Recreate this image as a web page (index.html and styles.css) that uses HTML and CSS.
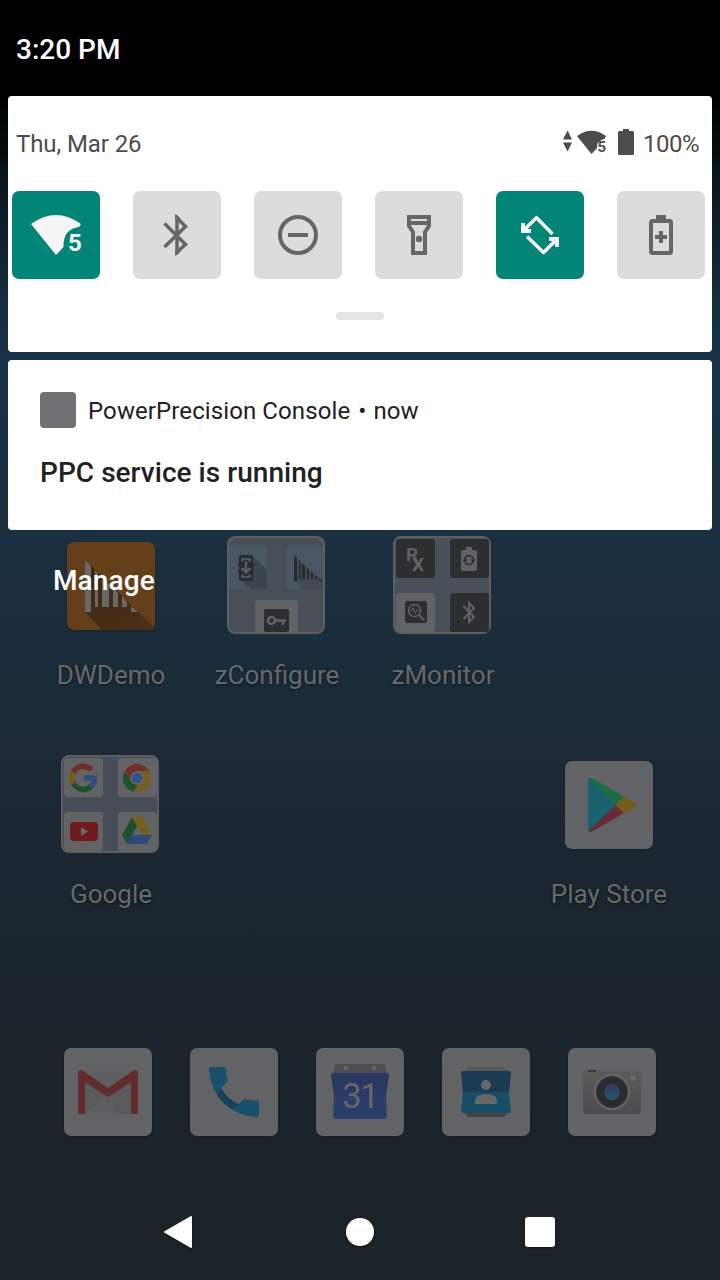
FILE: index.html
```html
<!DOCTYPE html>
<html lang="en">
<head>
<meta charset="utf-8">
<title>Quick settings</title>
<link rel="stylesheet" href="styles.css">
</head>
<body>
<div class="screen">
  <header class="status">3:20 PM</header>
  <section class="panel">
    <div class="info">
      <span class="date">Thu, Mar 26</span>
      <div class="signals">
        <svg class="traffic" width="10" height="22" viewBox="0 0 10 22" fill="#4c4c4c"><path d="M4.500 .5 9 9.500H0zM0 12.500h9L4.500 21.500z"/></svg>
        <svg class="wifi" width="30" height="25" viewBox="0 0 30 25"><path fill="#4c4c4c" d="M0 6Q14.500-4.300 29 6L27.500 9Q19.500 10.500 20 18L14.500 24z"/><text class="wifi-num" x="20.500" y="21.500">5</text></svg>
        <svg class="charge" width="16" height="26" viewBox="0 0 16 26"><path fill="#4c4c4c" d="M5 0h6v2h3.500Q16 2 16 3.500v21q0 1.500-1.500 1.500h-13Q0 26 0 24.500v-21Q0 2 1.500 2H5z"/></svg>
        <span class="percent">100%</span>
      </div>
    </div>
    <div class="toggles">
      <div class="toggle on"><svg width="88" height="88" viewBox="0 0 88 88"><path fill="#f5f5f5" d="M19 33Q44 15 69 33L67 36Q51 38 51.500 56L44 64z"/><text class="toggle-num" x="56" y="59.500">5</text></svg></div>
      <div class="toggle"><svg width="88" height="88" viewBox="0 0 88 88"><path fill="none" stroke="#666" stroke-width="3.500" d="M31.500 32.500 52.500 53.500 44 61V27L52.500 35.500 31.500 56"/><path fill="#666" d="M42.250 24h2l4 4.500h-6zM42.250 59.500h6l-4 4.500h-2z"/></svg></div>
      <div class="toggle"><svg width="88" height="88" viewBox="0 0 88 88"><circle cx="44" cy="44" r="18" fill="none" stroke="#666" stroke-width="4"/><path stroke="#666" stroke-width="4" d="M34 44h20"/></svg></div>
      <div class="toggle"><svg width="88" height="88" viewBox="0 0 88 88"><path fill="none" stroke="#666" stroke-width="4" d="M34 26h20v9l-4 6v21H38V41l-4-6zM34 32h20"/><circle cx="44" cy="48" r="3.200" fill="#666"/></svg></div>
      <div class="toggle on"><svg width="88" height="88" viewBox="0 0 88 88"><path fill="none" stroke="#f5f5f5" stroke-width="3.500" stroke-linejoin="round" d="M29 38 40.500 26.700 56.500 43M31 45.500 47.500 61.500 59 50"/><path fill="#f5f5f5" d="M25 32h4v3.500l2.500 2.500H35v4H25zM53 46h10v10h-4v-3.500L56.500 50H53z"/></svg></div>
      <div class="toggle"><svg width="88" height="88" viewBox="0 0 88 88"><rect x="34" y="30" width="20" height="32" rx="1.500" fill="none" stroke="#666" stroke-width="4"/><path fill="#666" d="M39 24h10v5H39z"/><path stroke="#666" stroke-width="4" d="M38 46h12M44 40v12"/></svg></div>
    </div>
    <div class="handle"></div>
  </section>
  <section class="notice">
    <div class="source"><i class="source-icon"></i><span>PowerPrecision Console</span><b class="dot">•</b><span>now</span></div>
    <div class="message">PPC service is running</div>
  </section>

  <main class="home">
    <div class="manage">Manage</div>
    <div class="row">
      <div class="app">
        <div class="slot"><svg class="icon" width="88" height="88" viewBox="0 0 88 88"><defs><linearGradient id="fade" x1="0" y1="0" x2=".9" y2="1"><stop offset="0" stop-color="#3b2614"/><stop offset="1" stop-color="#4c3116"/></linearGradient></defs><rect width="88" height="88" rx="7" fill="#643f1a"/><path fill="url(#fade)" d="M18 18 88 86 86 88H35L18 70z"/><path fill="#686868" d="M18 18l6 6v46h-6zM28 28l3 3v34h-3zM35 35l7 7v23h-7zM46 46l5 5v14h-5zM55 54l5 6v5h-5zM64 64l7 6h-7z"/></svg></div>
        <span class="label">DWDemo</span>
      </div>
      <div class="app">
        <div class="slot"><svg class="folder" width="98" height="98" viewBox="0 0 98 98">
          <defs><clipPath id="folder-clip"><rect x="1" y="1" width="96" height="96" rx="7"/></clipPath></defs>
          <rect x="1" y="1" width="96" height="96" rx="7" fill="#484f57"/>
          <g clip-path="url(#folder-clip)"><rect x="0" y="10" width="40" height="43" rx="2" fill="#4a5661"/><rect x="59" y="10" width="42" height="43" rx="2" fill="#4a5661"/><path fill="#3b454e" d="M26 20 40 34v19H24L13 44z"/>
          <path fill="#414a53" d="M67 45V20l31 28v5H76z"/>
          <rect x="12" y="19" width="14" height="26" rx="2.500" fill="#282b2e"/><path fill="#282b2e" d="m10.500 28 3-2h11l3 2-1.500 4 1.500 4-3 2h-11l-3-2 1.500-4z"/><path fill="#4a5661" d="M14 22h10v3l-2 1-1-2h-4l-1 2-2-1zM14 42h10v-3l-2-1-1 2h-4l-1-2-2 1z"/><path fill="none" stroke="#56616b" stroke-width="2.400" d="M19 25.500v11M14.500 32l4.500 4.500 4.500-4.500"/>
          <path fill="#272a2d" d="M67 19l3 3v23h-3zM72 24l1.500 1.500V43H72zM75 27l3 3v13h-3zM80 32l2 2v9h-2zM84 35l2 2v6h-2zM88 39l4 4h-4zM92 42l4 3h-4z"/>
          <rect x="28" y="64" width="43" height="40" rx="3" fill="#616263"/><rect x="37" y="73" width="25" height="23" rx="2" fill="#2c2e30"/><circle cx="44.500" cy="84.500" r="3.500" fill="none" stroke="#636567" stroke-width="2.500"/><path fill="none" stroke="#636567" stroke-width="2.500" d="M48 84.500h11M56 84v5"/></g>
          <rect x="1" y="1" width="96" height="96" rx="7" fill="none" stroke="#5d5e60" stroke-width="2"/></svg></div>
        <span class="label">zConfigure</span>
      </div>
      <div class="app">
        <div class="slot"><svg class="folder" width="98" height="98" viewBox="0 0 98 98"><rect x="1" y="1" width="96" height="96" rx="7" fill="#48515a" stroke="#5d5e60" stroke-width="2"/>
          <g fill="#2d2e30"><rect x="3" y="3" width="39" height="39" rx="3"/><rect x="57" y="3" width="39" height="39" rx="3"/><rect x="57" y="57" width="39" height="39" rx="3"/></g><rect x="3" y="57" width="39" height="39" rx="3" fill="#626364"/>
          <text class="rx" x="13" y="24.500">R<tspan x="19" y="34.700">X</tspan></text>
          <path fill="#616263" d="M73 11h6v3h3q2 0 2 2v17q0 2-2 2H70q-2 0-2-2V16q0-2 2-2h3z"/><path fill="none" stroke="#2d2e30" stroke-width="1.500" d="M72 23q1-4 4.500-3.500 3 .3 4 4M80 25q-1 4-4.500 3.500-3-.3-4-4"/><path fill="#2d2e30" d="M69.500 25 72 21.500l2.500 3.500zM77.500 23.500h5L80 27z"/>
          <rect x="12" y="65" width="22" height="22" rx="2" fill="#2d2e30"/><circle cx="21.500" cy="74.500" r="6" fill="none" stroke="#616263" stroke-width="1.500"/><path fill="none" stroke="#616263" stroke-width="2.200" d="m26 79 5 5"/><path fill="none" stroke="#616263" d="M16.500 75h2l1.500-3.500 2 6 1.500-3.500h3"/>
          <path fill="none" stroke="#616263" stroke-width="2" d="M70.500 70 81 81l-5 5V67l5 5-10.500 11"/></svg></div>
        <span class="label">zMonitor</span>
      </div>
    </div>
    <div class="row">
      <div class="app">
        <div class="slot"><svg class="folder" width="98" height="98" viewBox="0 0 98 98"><rect x="1" y="1" width="96" height="96" rx="7" fill="#474d57" stroke="#5d5e60" stroke-width="2"/>
          <g fill="#626364"><rect x="3" y="3" width="39" height="39" rx="3"/><rect x="57" y="3" width="39" height="39" rx="3"/><rect x="3" y="57" width="39" height="39" rx="3"/><rect x="57" y="57" width="39" height="39" rx="3"/></g>
          <g fill="none" stroke-width="5.500"><path stroke="#6f2c29" d="M12.500 17A11.300 11.300 0 0 1 30.700 14.800"/><path stroke="#745b15" d="M12.500 28.500a11.300 11.300 0 0 1 0-11.500"/><path stroke="#1c512c" d="M29.800 31.600a11.300 11.300 0 0 1-17.300-3.100"/><path stroke="#2f4c81" d="M23 23h10.500q0 5-3.700 8.600"/></g>
          <circle cx="76" cy="23" r="14" fill="#745f20"/><path fill="#6f2f2b" d="M63.900 16A14 14 0 0 1 88.100 16H76L70 26.500z"/><path fill="#1c512c" d="M63.900 16 70 26.500 76 30l-3 6.800A14 14 0 0 1 63.900 16z"/><circle cx="76" cy="23" r="6" fill="#31538c" stroke="#65696b" stroke-width="1.500"/>
          <rect x="9" y="67" width="28" height="19" rx="4" fill="#701a1d"/><path fill="#686868" d="m20 72 7 4.500-7 4.500z"/>
          <path fill="#1c512c" d="m71 62 5 9-10 18-5-9z"/><path fill="#74601f" d="M71 62h10l10 18H81z"/><path fill="#2d4a7e" d="m71 80h20l-5 9H66z"/></svg></div>
        <span class="label">Google</span>
      </div>
      <div class="app"></div><div class="app"></div>
      <div class="app">
        <div class="slot"><svg class="icon" width="88" height="88" viewBox="0 0 88 88"><rect width="88" height="88" rx="7" fill="#626365"/><path fill="#19616d" d="M23 19q0-2 2-2l26 27-25 27q-3 0-3-3z"/><path fill="#1c6d43" d="M23.500 18q1-1.500 4-.5l31.500 18L51 44z"/><path fill="#6a2935" d="m51 44 8 8-32 18.500q-2 1-3.500-.5z"/><path fill="#745d19" d="m59 35.500 11 6q3 2.500 0 5L59 52.500 51 44z"/></svg></div>
        <span class="label">Play Store</span>
      </div>
    </div>
    <div class="dock">
      <svg class="icon" width="88" height="88" viewBox="0 0 88 88"><rect width="88" height="88" rx="7" fill="#626365"/><path fill="#5e5f60" d="M19 22h50v44H19z"/><path fill="#595a5b" d="M21 34 44 49 67 34v32H21z"/><path fill="#5d5e5f" d="M21 66 39 51l5 4 5-4 2 15z"/><path fill="#612c2b" d="M14 25q0-3 3-3 1 0 2 .7L44 40l25-17.300q1-.7 2-.7 3 0 3 3v39q0 2-2 2h-5V34L44 49 21 34v32h-5q-2 0-2-2z"/></svg>
      <svg class="icon" width="88" height="88" viewBox="0 0 88 88"><rect width="88" height="88" rx="7" fill="#626365"/><path fill="#194158" d="m26 45 5-5Q38 52 49 56l-6 6Q31 55 26 45z"/><path fill="#18506c" d="M21 19h13q2 0 2 2 0 7 2 12L26 45q-6-10-7-24 0-2 2-2zM43 62l11-11q5 1.500 13 1.500 2 0 2 2V67q0 2-2 2-14-1-24-7z"/></svg>
      <svg class="icon" width="88" height="88" viewBox="0 0 88 88"><rect width="88" height="88" rx="7" fill="#626365"/><path fill="#4d4e4f" d="M18 25v-6q0-3 4-3h44q4 0 4 3v6z"/><g fill="#646566"><circle cx="30" cy="20" r="2.200"/><circle cx="58" cy="20" r="2.200"/></g><path fill="#293961" d="M17 25h54q2 0 2 2l-3 21H18L15 27q0-2 2-2z"/><path fill="#2b3e69" d="M18 48h52l1 20q0 3-3 3H20q-3 0-3-3z"/><text class="day" x="44" y="60" text-anchor="middle">31</text></svg>
      <svg class="icon" width="88" height="88" viewBox="0 0 88 88"><rect width="88" height="88" rx="7" fill="#626365"/><path fill="#565859" d="m27 19h34l4 4H23z"/><path fill="#424345" d="M23 65h42l-3 4H26z"/><path fill="#1a3b50" d="M21 23h46q2 0 2 2l-2 19H21l-2-19q0-2 2-2z"/><path fill="#184e65" d="M21 44h46l2 19q0 2-2 2H21q-2 0-2-2z"/><circle cx="44" cy="37" r="5" fill="#666768"/><path fill="#666768" d="M33 56v-3q0-7 11-7t11 7v3z"/></svg>
      <svg class="icon" width="88" height="88" viewBox="0 0 88 88"><defs><linearGradient id="body" x1="0" y1="0" x2="0" y2="1"><stop offset="0" stop-color="#5a5b5b"/><stop offset="1" stop-color="#4c4d4e"/></linearGradient><linearGradient id="lens" x1="0" y1="0" x2="0" y2="1"><stop offset="0" stop-color="#343664"/><stop offset="1" stop-color="#24576b"/></linearGradient></defs><rect width="88" height="88" rx="7" fill="#626365"/><rect x="15" y="22.500" width="58" height="43.500" rx="3" fill="url(#body)"/><path fill="#393a3b" d="M20 22h8v2h-8z"/><circle cx="44" cy="44" r="17" fill="#333436" stroke="#666768" stroke-width="2"/><circle cx="44" cy="44" r="14.500" fill="#2a2b2c"/><circle cx="44" cy="44" r="8" fill="url(#lens)"/><circle cx="65" cy="30" r="2.700" fill="#69696a"/></svg>
    </div>
  </main>
  <nav class="nav">
    <svg width="30" height="34" viewBox="0 0 30 34"><path fill="#fff" stroke="#fff" stroke-width="2" stroke-linejoin="round" d="M2 17 28 2v30z"/></svg>
    <i class="nav-home"></i>
    <i class="nav-recent"></i>
  </nav>
</div>
</body>
</html>
```
FILE: styles.css
```css
* { box-sizing: border-box; }
body { margin: 0; font-family: Roboto, "Liberation Sans", sans-serif; }
svg { display: block; flex: none; }
.screen {
  width: 720px;
  height: 1280px;
  overflow: hidden;
  display: flex;
  flex-direction: column;
  background: linear-gradient(#000 96px, #0a151c 180px, #132b3c 290px, #173448 360px, #1a3040 530px, #1b2c39 680px, #1b2731 850px, #1c242c 1040px, #1b2228 1280px);
}
.status {
  height: 96px;
  padding: 33px 16px 0;
  background: #000;
  color: #fff;
  font-size: 28px;
  font-weight: 500;
  line-height: 33px;
}
.panel {
  height: 256px;
  margin: 0 8px 8px;
  padding: 31px 7px 0 4px;
  background: #fff;
  border-radius: 4px;
}
.info {
  display: flex;
  justify-content: space-between;
  height: 33px;
  padding: 0 6px 0 4px;
  color: #4c4c4c;
  font-size: 24px;
  line-height: 34px;
}
.date { letter-spacing: -.1px; }
.percent { letter-spacing: -.5px; }
.signals { display: flex; align-items: flex-start; }
.traffic { margin: 3px 4px 0 0; }
.wifi { margin: 3px 11px 0 0; }
.charge { margin: 2px 9px 0 0; }
.wifi-num { font-size: 15px; font-weight: 700; fill: #4c4c4c; }
.toggles { display: flex; justify-content: space-between; margin-top: 31px; }
.toggle { width: 88px; height: 88px; border-radius: 7px; background: #dcdcdc; }
.toggle.on { background: #028577; }
.toggle-num { font-size: 24px; font-weight: 700; fill: #f5f5f5; }
.handle { width: 48px; height: 8px; margin: 33px 0 0 324px; border-radius: 4px; background: #e4e4e4; }
.notice {
  height: 170px;
  margin: 0 8px;
  padding: 32px;
  background: #fff;
  border-radius: 4px;
  color: #212121;
}
.source { display: flex; align-items: center; height: 38px; font-size: 24px; letter-spacing: .1px; }
.source-icon { width: 36px; height: 36px; margin: -2px 12px 0 0; border-radius: 4px; background: #707173; }
.dot { margin: 0 7px 0 8px; font-size: 24px; font-weight: 400; }
.message { margin-top: 26px; font-size: 28px; font-weight: 500; line-height: 33px; letter-spacing: .04px; }
.home { position: relative; height: 654px; padding-top: 6px; flex: none; }
.manage {
  position: absolute;
  z-index: 1;
  left: 53px;
  top: 34px;
  color: #fff;
  font-size: 28px;
  font-weight: 500;
  line-height: 33px;
  letter-spacing: .1px;
}
.row { display: flex; height: 219px; padding-left: 28px; }
.app { display: flex; flex-direction: column; align-items: center; width: 166px; }
.slot { display: flex; justify-content: center; align-items: center; height: 98px; }
.icon { filter: drop-shadow(0 1px 1px #0004); }
.slot .icon { margin-top: 2px; }
.folder { margin-right: 2px; }
.label {
  margin-top: 26px;
  color: #67696a;
  font-size: 26px;
  line-height: 31px;
  text-shadow: 0 1px 3px #0008;
}
.rx { font-size: 19px; font-weight: 700; fill: #616263; }
.day { font-size: 35px; fill: #656667; letter-spacing: -2px; }
.dock { display: flex; gap: 38px; padding: 74px 0 0 64px; }
.nav { display: flex; align-items: center; padding-left: 163px; height: 96px; filter: drop-shadow(0 1px 1px #0006); }
.nav-home { width: 28px; height: 28px; margin: 0 151px 0 153px; border-radius: 50%; background: #fff; }
.nav-recent { width: 30px; height: 30px; border-radius: 3px; background: #fff; }
```
